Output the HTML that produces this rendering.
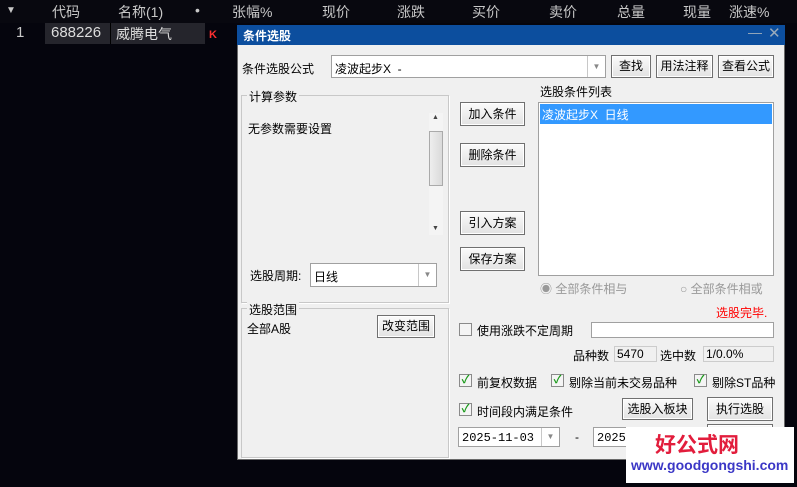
<!DOCTYPE html>
<html><head><meta charset="utf-8"><style>
*{margin:0;padding:0;box-sizing:border-box}
body{width:797px;height:487px;background:#05050d;font-family:"Liberation Sans","Noto Sans CJK SC",sans-serif;position:relative;overflow:hidden;font-size:12px;color:#000}
.a{position:absolute;white-space:nowrap}
.h{color:#c8c8c8;font-size:14px;top:2px}
.btn{position:absolute;background:linear-gradient(#fbfbfb,#e2e2e2);border:1px solid #707070;box-shadow:inset 0 0 0 1px #fff;text-align:center;font-size:12px;line-height:20px}
.box{position:absolute;background:#fff;border:1px solid #a0a0a0}
.grp{position:absolute;border:1px solid #c8c8c8;box-shadow:1px 1px 0 #fff}
.cb{position:absolute;width:13px;height:13px;border:1px solid #8a8a8a;background:#f4f4f4;font-size:11px;color:#1a9a1a;line-height:11px;text-align:center;font-weight:bold}
.dd{position:absolute;right:0;top:0;bottom:0;width:18px;border-left:1px solid #c8c8c8;color:#888;font-size:8px;text-align:center}
</style></head><body>
<div class="a" style="left:0;top:0;width:797px;height:23px;background:#08080f"></div>
<div class="a h" style="left:6px;font-size:10px;top:5px">▼</div>
<div class="a h" style="left:52px">代码</div>
<div class="a h" style="left:118px">名称(1)</div>
<div class="a h" style="left:195px">•</div>
<div class="a h" style="left:232px">张幅%</div>
<div class="a h" style="left:322px">现价</div>
<div class="a h" style="left:397px">涨跌</div>
<div class="a h" style="left:472px">买价</div>
<div class="a h" style="left:549px">卖价</div>
<div class="a h" style="left:617px">总量</div>
<div class="a h" style="left:683px">现量</div>
<div class="a h" style="left:729px">涨速%</div>
<div class="a" style="left:45px;top:23px;width:160px;height:21px;background:#25252c"></div>
<div class="a" style="left:110px;top:23px;width:1px;height:21px;background:#000"></div>
<div class="a h" style="left:16px;top:24px;font-size:15px">1</div>
<div class="a h" style="left:51px;top:24px;font-size:15px;color:#ddd">688226</div>
<div class="a h" style="left:116px;top:24px;font-size:14px;color:#ddd">威腾电气</div>
<div class="a" style="left:209px;top:29px;color:#ff3030;font-size:11px;font-weight:bold">K</div>

<div class="a" style="left:237px;top:25px;width:548px;height:435px;background:#f0f0f0;border:1px solid #6a6a6a"></div>
<div class="a" style="left:237px;top:25px;width:548px;height:20px;background:#0c4e9e"></div>
<div class="a" style="left:243px;top:27px;color:#fff;font-weight:bold;font-size:12px">条件选股</div>
<div class="a" style="left:748px;top:24px;color:#9ab;font-size:14px">—</div>
<div class="a" style="left:768px;top:24px;color:#9ab;font-size:15px">✕</div>

<div class="a" style="left:242px;top:60px">条件选股公式</div>
<div class="box" style="left:331px;top:55px;width:275px;height:23px"><span class="a" style="left:3px;top:4px">凌波起步X&nbsp; -</span><div class="dd" style="line-height:21px">▼</div></div>
<div class="btn" style="left:611px;top:55px;width:40px;height:23px">查找</div>
<div class="btn" style="left:656px;top:55px;width:57px;height:23px">用法注释</div>
<div class="btn" style="left:718px;top:55px;width:56px;height:23px">查看公式</div>

<div class="grp" style="left:241px;top:95px;width:208px;height:208px"></div>
<div class="a" style="left:247px;top:88px;background:#f0f0f0;padding:0 2px">计算参数</div>
<div class="a" style="left:248px;top:120px">无参数需要设置</div>
<div class="a" style="left:429px;top:113px;width:14px;height:122px;background:#f4f4f4"></div>
<div class="a" style="left:429px;top:131px;width:14px;height:55px;background:linear-gradient(90deg,#eee,#dadada);border:1px solid #aaa"></div>
<div class="a" style="left:432px;top:114px;font-size:7px;color:#444">▲</div>
<div class="a" style="left:432px;top:225px;font-size:7px;color:#444">▼</div>
<div class="a" style="left:250px;top:267px">选股周期:</div>
<div class="box" style="left:310px;top:263px;width:127px;height:24px"><span class="a" style="left:3px;top:4px">日线</span><div class="dd" style="line-height:22px">▼</div></div>

<div class="btn" style="left:460px;top:102px;width:65px;height:24px;line-height:22px">加入条件</div>
<div class="btn" style="left:460px;top:143px;width:65px;height:24px;line-height:22px">删除条件</div>
<div class="btn" style="left:460px;top:211px;width:65px;height:24px;line-height:22px">引入方案</div>
<div class="btn" style="left:460px;top:247px;width:65px;height:24px;line-height:22px">保存方案</div>

<div class="a" style="left:540px;top:83px">选股条件列表</div>
<div class="box" style="left:538px;top:102px;width:236px;height:174px"></div>
<div class="a" style="left:540px;top:104px;width:232px;height:20px;background:#3399ff;color:#fff;padding:2px 2px">凌波起步X&nbsp; 日线</div>
<div class="a" style="left:540px;top:280px;color:#999">◉ 全部条件相与</div>
<div class="a" style="left:680px;top:280px;color:#999">○ 全部条件相或</div>
<div class="a" style="left:716px;top:304px;color:#f00">选股完毕.</div>

<div class="grp" style="left:241px;top:308px;width:208px;height:150px"></div>
<div class="a" style="left:247px;top:301px;background:#f0f0f0;padding:0 2px">选股范围</div>
<div class="a" style="left:247px;top:320px">全部A股</div>
<div class="btn" style="left:377px;top:315px;width:58px;height:23px">改变范围</div>

<div class="cb" style="left:459px;top:323px"></div>
<div class="a" style="left:477px;top:322px">使用涨跌不定周期</div>
<div class="box" style="left:591px;top:322px;width:183px;height:16px"></div>
<div class="a" style="left:573px;top:347px">品种数</div>
<div class="a" style="left:614px;top:346px;width:43px;height:16px;border:1px solid #ccc;padding-left:2px">5470</div>
<div class="a" style="left:660px;top:347px">选中数</div>
<div class="a" style="left:703px;top:346px;width:71px;height:16px;border:1px solid #ccc;padding-left:2px">1/0.0%</div>

<div class="cb" style="left:459px;top:374px">✓</div><div class="a" style="left:477px;top:374px">前复权数据</div>
<div class="cb" style="left:551px;top:374px">✓</div><div class="a" style="left:569px;top:374px">剔除当前未交易品种</div>
<div class="cb" style="left:694px;top:374px">✓</div><div class="a" style="left:712px;top:374px">剔除ST品种</div>
<div class="cb" style="left:459px;top:403px">✓</div><div class="a" style="left:477px;top:403px">时间段内满足条件</div>
<div class="btn" style="left:622px;top:398px;width:71px;height:22px">选股入板块</div>
<div class="btn" style="left:707px;top:397px;width:66px;height:24px;line-height:22px">执行选股</div>
<div class="box" style="left:458px;top:427px;width:102px;height:20px"><span class="a" style="left:3px;top:3px;font-family:'Liberation Mono',monospace">2025-11-03</span><div class="dd" style="line-height:18px">▼</div></div>
<div class="a" style="left:575px;top:430px">-</div>
<div class="box" style="left:593px;top:427px;width:40px;height:20px"><span class="a" style="left:3px;top:3px;font-family:'Liberation Mono',monospace">2025-</span></div>
<div class="btn" style="left:707px;top:424px;width:66px;height:10px"></div>

<div class="a" style="left:626px;top:427px;width:168px;height:56px;background:#fff"></div>
<div class="a" style="left:655px;top:429px;color:#e21d3c;font-size:21px;font-weight:bold">好公式网</div>
<div class="a" style="left:631px;top:457px;color:#3b37c6;font-size:14px;font-weight:bold">www.goodgongshi.com</div>
</body></html>
